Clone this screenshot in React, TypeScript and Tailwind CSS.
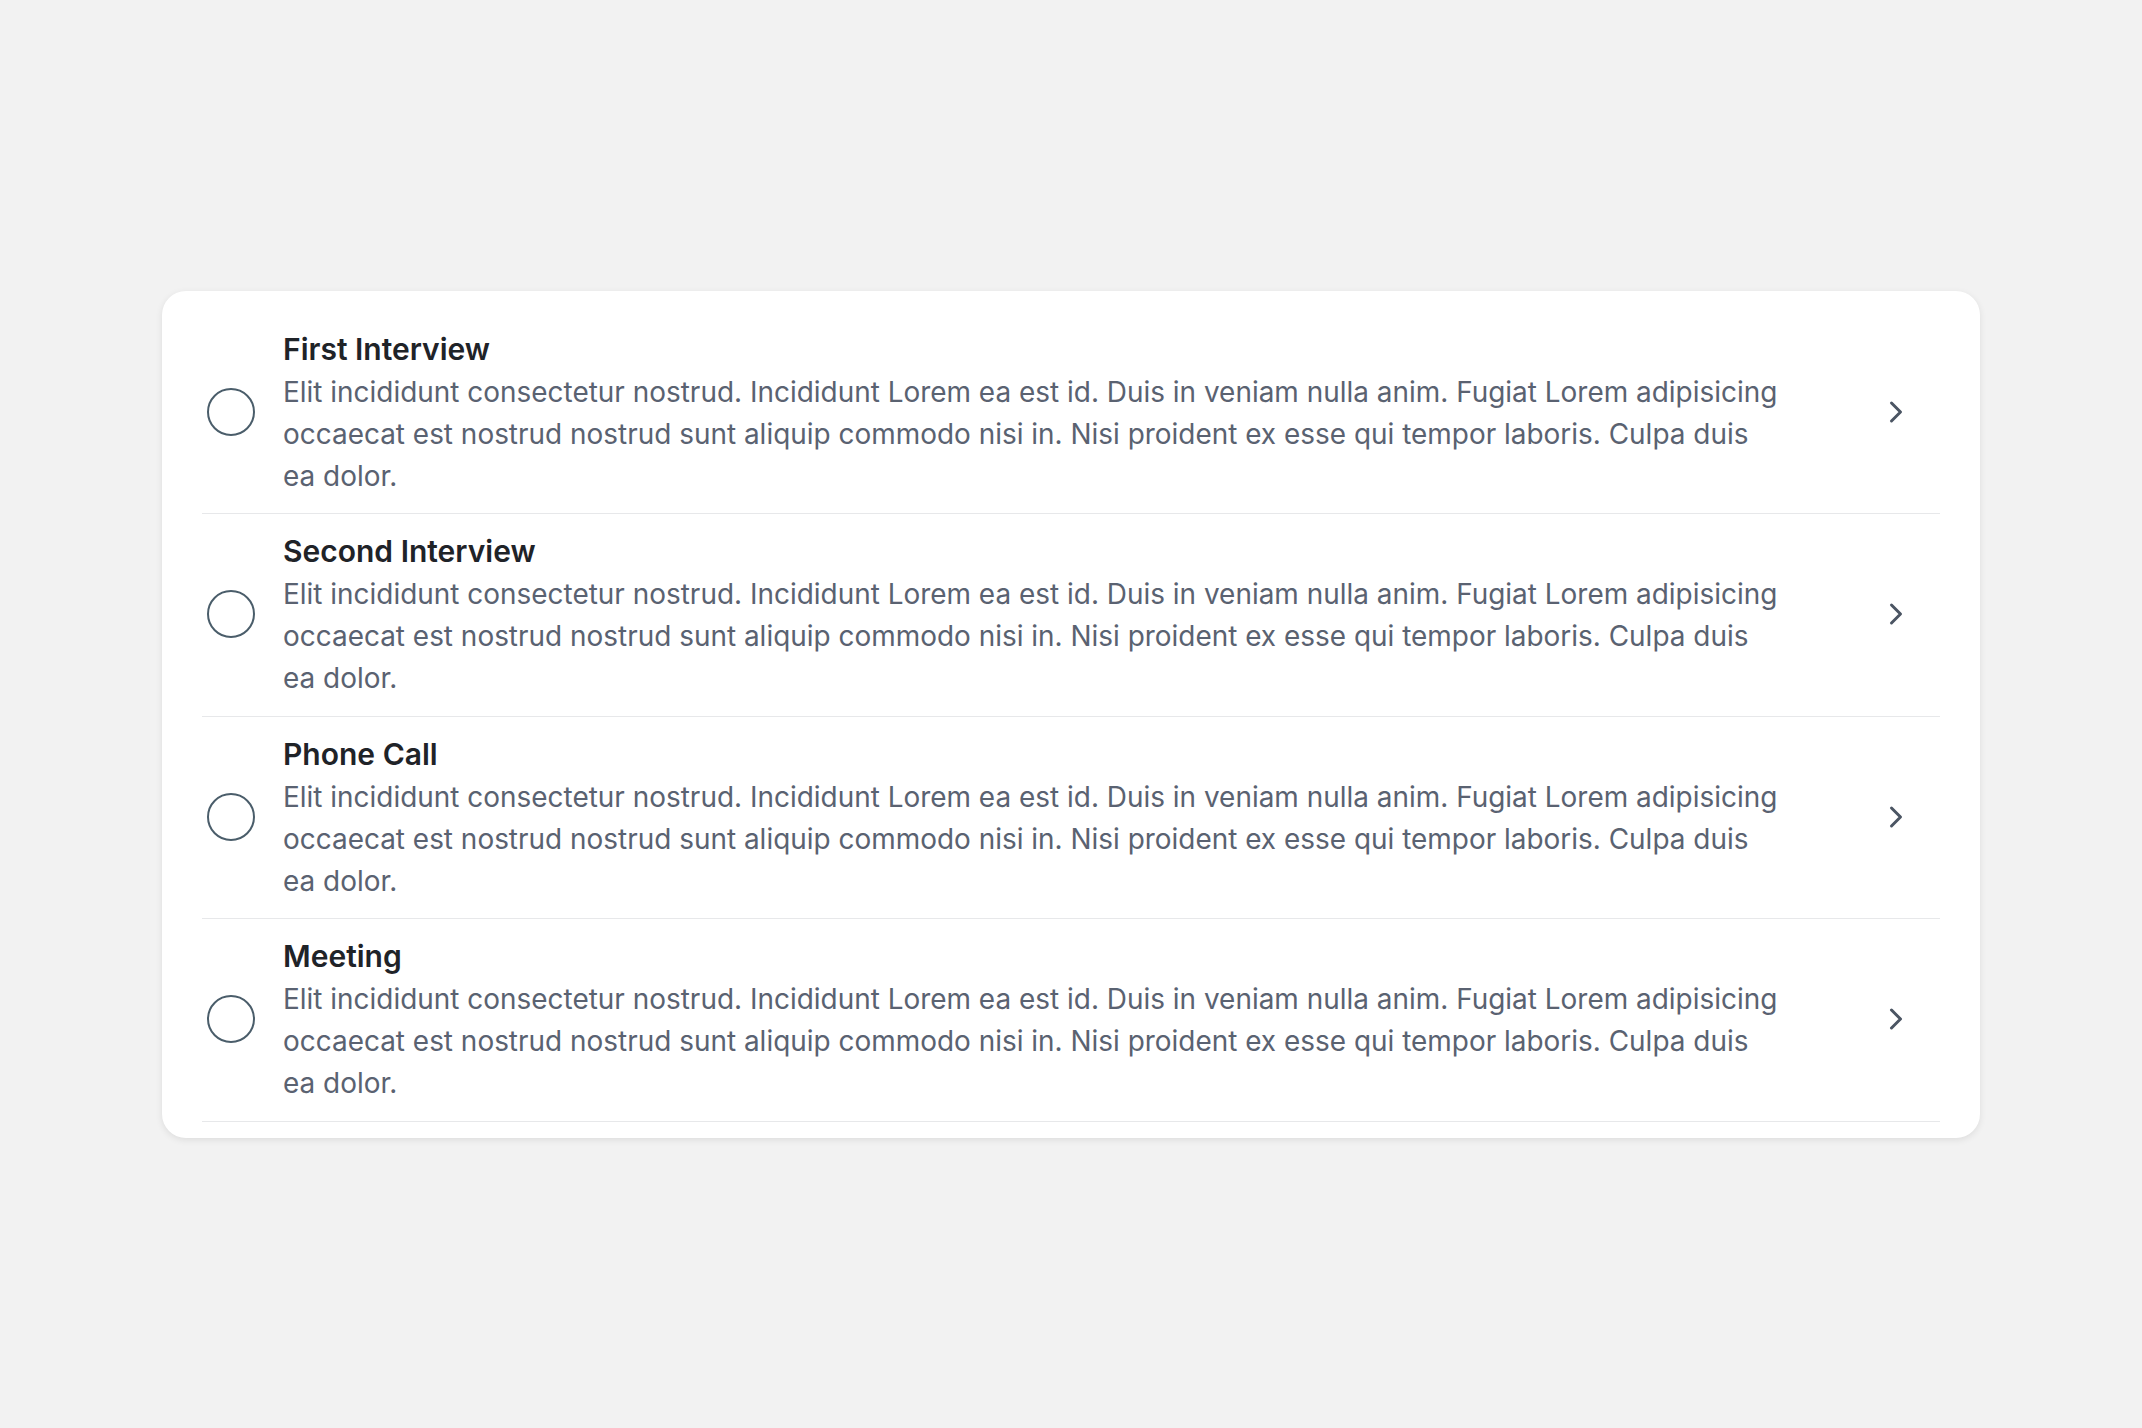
import { ChevronRight } from "lucide-react";

type Step = { title: string; body: string };

const BODY =
  "Elit incididunt consectetur nostrud. Incididunt Lorem ea est id. Duis in veniam nulla anim. Fugiat Lorem adipisicing occaecat est nostrud nostrud sunt aliquip commodo nisi in. Nisi proident ex esse qui tempor laboris. Culpa duis ea dolor.";

const steps: Step[] = [
  { title: "First Interview", body: BODY },
  { title: "Second Interview", body: BODY },
  { title: "Phone Call", body: BODY },
  { title: "Meeting", body: BODY },
];

function StepRow({ step }: { step: Step }) {
  return (
    <li className="flex items-center border-b-[1.5px] border-[#e7e8ea] pb-[16.5px] pt-[15px] pr-[26px]">
      <span className="ml-[5px] h-[48px] w-[48px] shrink-0 rounded-full border-2 border-[#4a5d6a]" />
      <div className="ml-[28px] min-w-0 flex-1">
        <h3 className="text-[30px] font-semibold leading-[44px] text-[#1f2328]">{step.title}</h3>
        <p className="max-w-[1499px] text-[27.95px] leading-[42px] text-[#5a6271]">{step.body}</p>
      </div>
      <ChevronRight size={36} strokeWidth={2} className="ml-[30px] shrink-0 text-[#4b5563]" />
    </li>
  );
}

export default function App() {
  return (
    <div
      className="flex min-h-screen items-center justify-center bg-[#f2f2f2]"
      style={{ fontFamily: "Inter, 'Noto Sans', sans-serif" }}
    >
      <div className="w-[1818px] rounded-[24px] bg-white px-[40px] pb-[16px] pt-[21px] shadow-[0_2px_7px_rgba(0,0,0,0.09)]">
        <ul>
          {steps.map((s) => (
            <StepRow key={s.title} step={s} />
          ))}
        </ul>
      </div>
    </div>
  );
}
